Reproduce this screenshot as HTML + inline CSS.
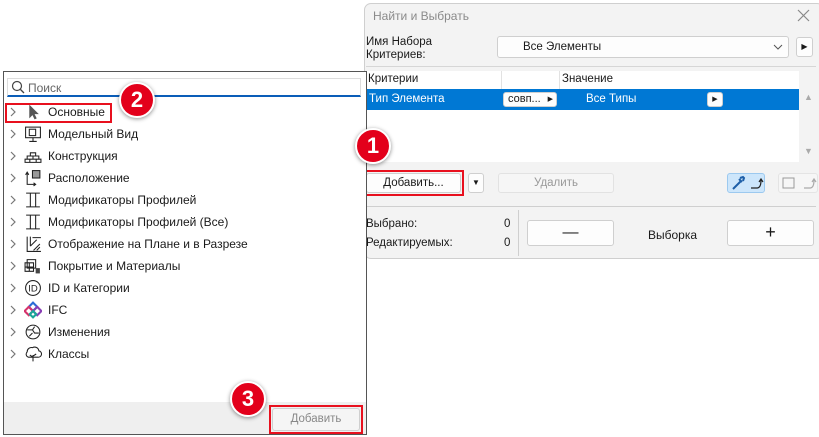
<!DOCTYPE html>
<html><head><meta charset="utf-8"><style>
*{box-sizing:border-box;margin:0;padding:0}
body{width:819px;height:437px;background:#fff;position:relative;overflow:hidden;font-family:"Liberation Sans",sans-serif;font-size:11.5px;color:#1a1a1a}
.a{position:absolute}
.btn{position:absolute;background:#fdfdfd;border:1px solid #cfcfcf;border-radius:3px;text-align:center}
.badge{position:absolute;width:36px;height:36px;border-radius:50%;background:#e3001b;border:2px solid #fff;box-shadow:0 1px 4px rgba(0,0,0,.45);color:#fff;font-weight:bold;font-size:22px;line-height:32px;text-align:center}
.red{position:absolute;border:2.5px solid #e8101e}
.row{position:absolute;left:8px;height:22px;line-height:22px;font-size:12px}
.chev{position:absolute;left:1px;top:6px}
.ic{position:absolute;left:16px;top:2px;width:18px;height:18px}
.tx{position:absolute;left:40px;top:0;white-space:nowrap}
</style></head><body>
<!-- right dialog -->
<div class="a" style="left:364px;top:3px;width:460px;height:256px;background:#f3f3f3;border:1px solid #cfcfcf;border-radius:7px"></div>
<div class="a" style="left:373px;top:9px;color:#8a8a8a;font-size:12px">Найти и Выбрать</div>
<svg class="a" style="left:797px;top:9px" width="13" height="13"><path d="M1 1l11 11M12 1L1 12" stroke="#888" stroke-width="1.2"/></svg>
<div class="a" style="left:366px;top:36px;line-height:13px">Имя Набора<br>Критериев:</div>
<div class="btn" style="left:497px;top:36px;width:292px;height:22px;text-align:left;padding-left:25px;line-height:20px">Все Элементы</div>
<svg class="a" style="left:773px;top:44px" width="10" height="7"><path d="M1 1l4 4 4-4" stroke="#555" fill="none"/></svg>
<div class="btn" style="left:796px;top:37px;width:17px;height:20px;font-size:8px;line-height:18px">▶</div>
<div class="a" style="left:366px;top:66px;width:450px;height:1px;background:#d6d6d6"></div>
<div class="a" style="left:364px;top:71px;width:435px;height:91px;background:#fff"></div>
<div class="a" style="left:501px;top:71px;width:1px;height:18px;background:#e2e2e2"></div>
<div class="a" style="left:559px;top:71px;width:1px;height:18px;background:#e2e2e2"></div>
<div class="a" style="left:368px;top:73px">Критерии</div>
<div class="a" style="left:562px;top:73px">Значение</div>
<div class="a" style="left:364px;top:89px;width:435px;height:21px;background:#0078d4"></div>
<div class="a" style="left:369px;top:93px;color:#fff">Тип Элемента</div>
<div class="btn" style="left:503px;top:92px;width:54px;height:15px;line-height:13px;font-size:11px;text-align:left;padding-left:4px">совп...<span style="position:absolute;right:3px;font-size:7px">▶</span></div>
<div class="a" style="left:586px;top:93px;color:#fff">Все Типы</div>
<div class="btn" style="left:707px;top:92px;width:16px;height:15px;font-size:7px;line-height:13px">▶</div>
<div class="a" style="left:804px;top:92px;color:#aaa;font-size:9px">▲</div>
<div class="a" style="left:804px;top:146px;color:#aaa;font-size:9px">▼</div>
<div class="btn" style="left:366px;top:173px;width:95px;height:20px;line-height:18px">Добавить...</div>
<div class="btn" style="left:468px;top:173px;width:16px;height:20px;font-size:8px;line-height:18px">▼</div>
<div class="btn" style="left:498px;top:173px;width:116px;height:20px;line-height:18px;color:#999;background:#f6f6f6;border-color:#e2e2e2">Удалить</div>
<div class="a" style="left:727px;top:173px;width:38px;height:20px;background:#cde6fb;border:1px solid #9cc9ef;border-radius:3px"></div>
<svg class="a" style="left:729px;top:174px" width="36" height="18"><path d="M4 15l8-8M10 5l3 3M11 4l3-1l1 1l-1 3" stroke="#1e5fa8" stroke-width="2" fill="none"/><path d="M22 14h6q4 0 4-8M30 8l2-3l2 3" stroke="#222" stroke-width="1.2" fill="none"/></svg>
<div class="a" style="left:778px;top:173px;width:40px;height:20px;background:#f6f6f6;border:1px solid #e4e4e4;border-radius:3px"></div>
<svg class="a" style="left:780px;top:174px" width="38" height="18"><rect x="3" y="4" width="11" height="10" fill="none" stroke="#999"/><path d="M24 14h6q4 0 4-8M32 8l2-3l2 3" stroke="#aaa" stroke-width="1.2" fill="none"/></svg>
<div class="a" style="left:366px;top:206px;width:450px;height:1px;background:#cfcfcf"></div>
<div class="a" style="left:518px;top:210px;width:1px;height:46px;background:#cfcfcf"></div>
<div class="a" style="left:366px;top:218px">Выбрано:</div>
<div class="a" style="left:504px;top:218px">0</div>
<div class="a" style="left:366px;top:237px">Редактируемых:</div>
<div class="a" style="left:504px;top:237px">0</div>
<div class="btn" style="left:527px;top:220px;width:87px;height:26px;line-height:24px;font-size:16px">—</div>
<div class="a" style="left:648px;top:228px;font-size:12px">Выборка</div>
<div class="btn" style="left:727px;top:220px;width:87px;height:26px;line-height:22px;font-size:18px">+</div>
<div class="red" style="left:365px;top:170px;width:99px;height:26px"></div>

<!-- left panel -->
<div class="a" style="left:3px;top:71px;width:364px;height:364px;background:#fff;border:1px solid #555"></div>
<div class="a" style="left:4px;top:402px;width:362px;height:32px;background:#efefef"></div>
<div class="a" style="left:7px;top:78px;width:354px;height:19px;border:1px solid #ddd;border-bottom:2px solid #0a5db8;background:#fff"></div>
<svg class="a" style="left:11px;top:80px" width="14" height="14"><circle cx="6" cy="6" r="4.5" fill="none" stroke="#444" stroke-width="1.2"/><path d="M9.5 9.5l3.5 3.5" stroke="#444" stroke-width="1.3"/></svg>
<div class="a" style="left:28px;top:81px;color:#666;font-size:12px">Поиск</div>

<svg width="0" height="0" style="position:absolute"><defs><symbol id="cv" viewBox="0 0 8 10"><path d="M2 1l4 4-4 4" stroke="#777" stroke-width="1.2" fill="none"/></symbol></defs></svg>
<div class="row" style="top:101px"><svg class="chev" width="8" height="10"><use href="#cv"/></svg><svg class="ic" viewBox="0 0 17 16"><path d="M5 1v13l3-3 2 4 2-1-2-4h4z" fill="#555"/></svg><span class="tx">Основные</span></div>
<div class="row" style="top:123px"><svg class="chev" width="8" height="10"><use href="#cv"/></svg><svg class="ic" viewBox="0 0 17 16"><rect x="1.5" y="1.5" width="14" height="10" fill="none" stroke="#222"/><rect x="5" y="3.5" width="6" height="6" fill="none" stroke="#222"/><path d="M8.5 11.5v3M5 15h7" stroke="#222"/></svg><span class="tx">Модельный Вид</span></div>
<div class="row" style="top:145px"><svg class="chev" width="8" height="10"><use href="#cv"/></svg><svg class="ic" viewBox="0 0 17 16"><path d="M6 5h5v3H6zM3 8h11v3H3zM1 11h15v3H1zM8.5 8v3M5.5 11v3M11.5 11v3" fill="none" stroke="#222"/></svg><span class="tx">Конструкция</span></div>
<div class="row" style="top:167px"><svg class="chev" width="8" height="10"><use href="#cv"/></svg><svg class="ic" viewBox="0 0 17 16"><rect x="8" y="1" width="7" height="7" fill="#999" stroke="#222"/><path d="M3 3v11h8M1.5 5L3 2.5 4.5 5M9 12.5l2 1.5-2 1.5" fill="none" stroke="#222"/></svg><span class="tx">Расположение</span></div>
<div class="row" style="top:189px"><svg class="chev" width="8" height="10"><use href="#cv"/></svg><svg class="ic" viewBox="0 0 17 16"><path d="M2 1.5h13M2 14.5h13M6 1.5v13M11 1.5v13" stroke="#222" fill="none"/></svg><span class="tx">Модификаторы Профилей</span></div>
<div class="row" style="top:211px"><svg class="chev" width="8" height="10"><use href="#cv"/></svg><svg class="ic" viewBox="0 0 17 16"><path d="M2 1.5h13M2 14.5h13M6 1.5v13M11 1.5v13" stroke="#222" fill="none"/></svg><span class="tx">Модификаторы Профилей (Все)</span></div>
<div class="row" style="top:233px"><svg class="chev" width="8" height="10"><use href="#cv"/></svg><svg class="ic" viewBox="0 0 17 16"><path d="M3 1v14h13M6 1v9M6 10l6-6M9 14l6-6M12 14l3-3M8 2h8" stroke="#222" fill="none"/></svg><span class="tx">Отображение на Плане и в Разрезе</span></div>
<div class="row" style="top:255px"><svg class="chev" width="8" height="10"><use href="#cv"/></svg><svg class="ic" viewBox="0 0 17 16"><path d="M3 2h8v8H3zM1 5h8v8H1zM1 9h8M5 5v8" fill="#fff" stroke="#222"/><rect x="11" y="10" width="4" height="5" fill="#444"/></svg><span class="tx">Покрытие и Материалы</span></div>
<div class="row" style="top:277px"><svg class="chev" width="8" height="10"><use href="#cv"/></svg><svg class="ic" viewBox="0 0 17 16"><circle cx="8.5" cy="8" r="7" fill="none" stroke="#222"/><text x="4" y="11.5" font-size="9" font-family="Liberation Sans" fill="#222">ID</text></svg><span class="tx">ID и Категории</span></div>
<div class="row" style="top:299px"><svg class="chev" width="8" height="10"><use href="#cv"/></svg><svg class="ic" viewBox="0 0 17 16"><path d="M8.5 1l4 4-4 4-4-4z" fill="none" stroke="#2b6cd6" stroke-width="2"/><path d="M4.5 5l4 4-4 4-4-4z" fill="none" stroke="#d6336c" stroke-width="2"/><path d="M12.5 5l4 4-4 4-4-4z" fill="none" stroke="#8a3fb5" stroke-width="2"/><path d="M8.5 9l3 3-3 3-3-3z" fill="none" stroke="#1aa79a" stroke-width="2"/></svg><span class="tx">IFC</span></div>
<div class="row" style="top:321px"><svg class="chev" width="8" height="10"><use href="#cv"/></svg><svg class="ic" viewBox="0 0 17 16"><circle cx="8.5" cy="8" r="6.5" fill="none" stroke="#222"/><path d="M3 6h5l2 3h4M5 12l3-3M10 3l-2 3" fill="none" stroke="#222"/></svg><span class="tx">Изменения</span></div>
<div class="row" style="top:343px"><svg class="chev" width="8" height="10"><use href="#cv"/></svg><svg class="ic" viewBox="0 0 17 16"><path d="M8.5 15V9M8.5 11l-3-2M8.5 10l3-2M4 11a3 3 0 0 1-1-5a4 4 0 0 1 5-4a4 4 0 0 1 6 3a3 3 0 0 1-1 6z" fill="none" stroke="#222"/></svg><span class="tx">Классы</span></div>
<div class="red" style="left:5px;top:103px;width:107px;height:20px"></div>
<div class="badge" style="left:119px;top:82px">2</div>
<div class="badge" style="left:355px;top:128px">1</div>

<div class="btn" style="left:272px;top:408px;width:88px;height:23px;line-height:21px;color:#888;background:#f5f5f5">Добавить</div>
<div class="red" style="left:269px;top:405px;width:94px;height:29px"></div>
<div class="badge" style="left:230px;top:381px">3</div>
</body></html>
